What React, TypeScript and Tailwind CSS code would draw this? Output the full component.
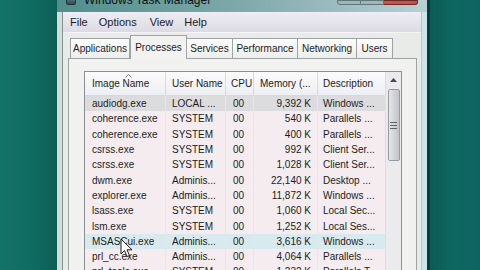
const rows: string[][] = [
  ['audiodg.exe', 'LOCAL ...', '00', '9,392 K', 'Windows ...'],
  ['coherence.exe', 'SYSTEM', '00', '540 K', 'Parallels ...'],
  ['coherence.exe', 'SYSTEM', '00', '400 K', 'Parallels ...'],
  ['csrss.exe', 'SYSTEM', '00', '992 K', 'Client Ser...'],
  ['csrss.exe', 'SYSTEM', '00', '1,028 K', 'Client Ser...'],
  ['dwm.exe', 'Adminis...', '00', '22,140 K', 'Desktop ...'],
  ['explorer.exe', 'Adminis...', '00', '11,872 K', 'Windows ...'],
  ['lsass.exe', 'SYSTEM', '00', '1,060 K', 'Local Sec...'],
  ['lsm.exe', 'SYSTEM', '00', '1,252 K', 'Local Ses...'],
  ['MSASCui.exe', 'Adminis...', '00', '3,616 K', 'Windows ...'],
  ['prl_cc.exe', 'Adminis...', '00', '4,064 K', 'Parallels ...'],
  ['prl_tools.exe', 'SYSTEM', '00', '1,232 K', 'Parallels T...'],
];

const tabs = ['Applications', 'Processes', 'Services', 'Performance', 'Networking', 'Users'];
const tabWidths = ['w-[60px]', 'w-[57px]', 'w-[46px]', 'w-[65px]', 'w-[59px]', 'w-[36px]'];

function rowBg(i: number) {
  if (i === 0) return 'bg-[#dcdcdf]';
  if (i === 9) return 'bg-[#d9eaef]';
  return 'bg-[#f4ecef]';
}

export default function App() {
  return (
    <div className="relative w-[480px] h-[270px] overflow-hidden flex bg-[#0f6b62] text-[#1c1c1c] font-['Liberation_Sans',Arial,sans-serif]">
      <div className="w-[57px] shrink-0 bg-gradient-to-r from-[#137268] via-[#106d63] to-[#0c5f57]" />

      {/* window */}
      <div className="w-[370px] shrink-0 flex flex-col">
        {/* title bar */}
        <div className="h-[12px] shrink-0 flex items-start overflow-hidden bg-gradient-to-r from-[#4f8f8c] via-[#7fa9aa] to-[#b7d0d4]">
          <div className="ml-[9px] mt-[-5px] w-[10px] h-[10px] rounded-[2px] bg-gradient-to-b from-[#6a8fa0] to-[#2e4a55] border border-[#24343a]" />
          <span className="ml-[8px] mt-[-6px] text-[12px] leading-[12px] text-[#111]">Windows Task Manager</span>
          <div className="ml-auto mr-[9px] flex h-[5px]">
            <div className="w-[24px] h-full bg-[#9db6b9] border border-[#5d7678] rounded-bl-[3px]" />
            <div className="w-[23px] h-full bg-[#9db6b9] border-y border-r border-[#5d7678]" />
            <div className="w-[34px] h-full bg-[#c4534b] border-y border-r border-[#6d2a25] rounded-br-[3px]" />
          </div>
        </div>

        <div className="flex-1 flex">
          {/* left frame */}
          <div className="w-[6px] bg-[#d3dddc] border-r border-[#7f9493]" />

          {/* client */}
          <div className="flex-1 flex flex-col bg-[#e9ebe8]">
            {/* menu bar */}
            <div className="h-[21px] shrink-0 flex items-center gap-[11px] pl-[7px] text-[11px] bg-gradient-to-b from-[#eeedf4] to-[#dcdbe5] border-b border-[#f4f4f8]">
              <span>File</span>
              <span>Options</span>
              <span className="ml-[2px]">View</span>
              <span>Help</span>
            </div>

            <div className="flex-1 flex flex-col pl-[5px] pr-[4px] pt-[1px]">
              {/* tabs */}
              <div className="h-[24px] shrink-0 flex items-end pl-[2px] relative z-10">
                {tabs.map((t, i) =>
                  i === 1 ? (
                    <div
                      key={t}
                      className={`${tabWidths[i]} h-[24px] mb-[-1px] flex items-center justify-center text-[10px] bg-[#f2f3f1] border-x border-t border-[#9ea3a3]`}
                    >
                      {t}
                    </div>
                  ) : (
                    <div
                      key={t}
                      className={`${tabWidths[i]} h-[20px] flex items-center justify-center text-[10px] bg-gradient-to-b from-[#fdfdfd] to-[#eceeed] border-t border-r border-[#9ea3a3] ${i === 0 ? 'border-l' : ''}`}
                    >
                      {t}
                    </div>
                  )
                )}
              </div>

              {/* panel */}
              <div className="flex-1 border border-[#9ea3a3] bg-[#f1f2f0] pl-[15px] pr-[14px] pt-[12px]">
                {/* listview */}
                <div className="h-full flex border border-[#8b9095] bg-[#f4ecef]">
                  <div className="flex-1 flex flex-col">
                    <div className="h-[24px] shrink-0 flex text-[10px] bg-gradient-to-b from-[#fbfbfc] to-[#eeeff2] border-b border-[#d7d7dc]">
                      <div className="relative w-[81px] flex items-center pl-[7px] border-r border-[#dadadf]">
                        Image Name
                        <svg className="absolute left-[40px] top-[2px]" width="7" height="4" viewBox="0 0 7 4">
                          <path d="M0.5 3.5 L3.5 0.5 L6.5 3.5" fill="none" stroke="#6b7a86" strokeWidth="1" />
                        </svg>
                      </div>
                      <div className="w-[60px] flex items-center pl-[6px] border-r border-[#dadadf]">User Name</div>
                      <div className="w-[28px] flex items-center pl-[5px] border-r border-[#dadadf]">CPU</div>
                      <div className="w-[64px] flex items-center pl-[6px] border-r border-[#dadadf]">Memory (...</div>
                      <div className="flex-1 flex items-center pl-[5px]">Description</div>
                    </div>

                    {rows.map((r, i) => (
                      <div key={i} className={`h-[15.3px] shrink-0 flex items-center text-[10px] ${rowBg(i)}`}>
                        <div className="w-[81px] h-full flex items-center pl-[7px] border-r border-[#ece4e7]">{r[0]}</div>
                        <div className="w-[60px] h-full flex items-center pl-[6px] border-r border-[#ece4e7]">{r[1]}</div>
                        <div className="w-[28px] h-full flex items-center pl-[7px] border-r border-[#ece4e7]">{r[2]}</div>
                        <div className="w-[64px] h-full flex items-center justify-end pr-[6px] border-r border-[#ece4e7]">{r[3]}</div>
                        <div className="flex-1 h-full flex items-center pl-[5px]">{r[4]}</div>
                      </div>
                    ))}
                  </div>

                  {/* scrollbar */}
                  <div className="w-[16px] shrink-0 flex flex-col items-center bg-[#ebeaec] border-l border-[#dedee2]">
                    <svg className="mt-[6px]" width="7" height="4" viewBox="0 0 7 4">
                      <path d="M0 4 L3.5 0 L7 4 Z" fill="#4a4a4a" />
                    </svg>
                    <div className="mt-[7px] w-[12px] h-[72px] rounded-[2px] border border-[#979a9e] bg-gradient-to-r from-[#e6e7e9] via-[#d3d4d7] to-[#c3c4c8] flex flex-col items-center justify-center gap-[2px]">
                      <div className="w-[7px] h-[1px] bg-[#5f6266]" />
                      <div className="w-[7px] h-[1px] bg-[#5f6266]" />
                      <div className="w-[7px] h-[1px] bg-[#5f6266]" />
                    </div>
                  </div>
                </div>
              </div>
            </div>
          </div>

          {/* right frame */}
          <div className="w-[6px] bg-[#cfe4e7] border-l border-[#b9c9ca]" />
        </div>
      </div>

      <div className="w-[3px] shrink-0 bg-[#0a3d3a]" />
      <div className="flex-1 bg-gradient-to-r from-[#0c5b57] via-[#0f6762] to-[#0e6460]" />

      {/* mouse pointer */}
      <svg className="absolute left-[120px] top-[238px]" width="13" height="20" viewBox="0 0 13 20">
        <path d="M1 1 L1 16 L4.5 12.5 L7 18.5 L9.5 17.5 L7 11.8 L12 11.8 Z" fill="#fff" stroke="#1a1a1a" strokeWidth="1" strokeLinejoin="round" />
      </svg>
    </div>
  );
}
